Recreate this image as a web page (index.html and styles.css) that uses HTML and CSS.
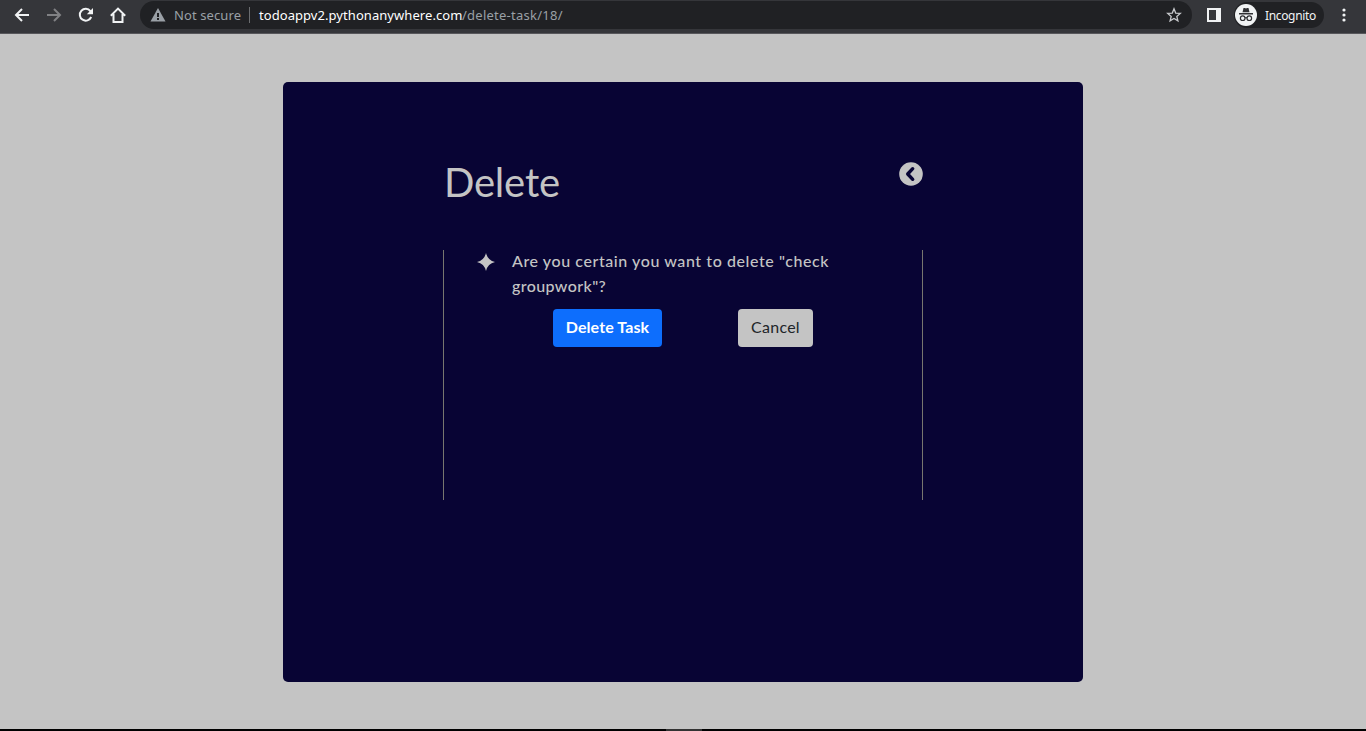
FILE: index.html
```html
<!DOCTYPE html>
<html lang="en">
<head>
<meta charset="utf-8">
<title>Delete</title>
<link rel="stylesheet" href="styles.css">
</head>
<body>
<header class="toolbar">
  <nav class="nav">
    <svg class="icon" viewBox="0 0 16 16"><path d="M15 8H2M8 2 2 8l6 6"/></svg>
    <svg class="icon dim" viewBox="0 0 16 16"><path d="M1 8h13M8 2l6 6-6 6"/></svg>
    <svg class="icon" viewBox="0 0 16 16"><path d="M13.2 10A5.9 5.9 0 1 1 12.4 4.1L14 5.8"/><path class="solid" d="M15 1v6.2H8.8z"/></svg>
    <svg class="icon" viewBox="0 0 16 16"><path d="M.8 8.700 8 1.600l7.200 7.100M3.500 7v8h9V7"/></svg>
  </nav>
  <div class="address">
    <svg class="warning" viewBox="0 0 16 14"><path fill="#9aa0a6" d="M8 0 15.500 13.500H.5z"/><path fill="#202124" d="M7 5h2v4H7zM7 10h2v2H7z"/></svg>
    <span class="security">Not secure</span>
    <span class="divider"></span>
    <span class="host">todoappv2.pythonanywhere.com</span><span class="path">/delete-task/18/</span>
    <svg class="star" viewBox="0 0 16 16"><path d="m8 1.800 1.700 4.300 4.600.3-3.500 3 1.100 4.500L8 11.400l-3.900 2.500 1.100-4.500-3.500-3 4.600-.3z"/></svg>
  </div>
  <svg class="panel-icon" viewBox="0 0 14 14"><path fill="#f1f3f4" d="M0 0h14v14H0z"/><path fill="#35363a" d="M2 2h7v10H2z"/></svg>
  <div class="profile">
    <svg class="avatar" viewBox="0 0 22 22"><circle cx="11" cy="11" r="11" fill="#f1f3f4"/><path fill="#303134" d="m7.500 8.300 1-4.300h1.300l1.200.5 1.200-.5h1.300l1 4.300zM4 9h14v1.400H4z"/><g fill="none" stroke="#303134" stroke-width="1.200"><circle cx="7.700" cy="14.200" r="2.300"/><circle cx="14.300" cy="14.200" r="2.300"/><path d="M10 14q1-.8 2 0"/></g></svg>
    <span class="profile-name">Incognito</span>
  </div>
  <svg class="menu" viewBox="0 0 4 14"><circle cx="2" cy="2" r="1.600"/><circle cx="2" cy="7" r="1.600"/><circle cx="2" cy="12" r="1.600"/></svg>
</header>
<main class="page">
  <section class="card">
    <div class="heading">
      <h1>Delete</h1>
      <svg class="back" viewBox="0 0 24 24"><circle cx="12" cy="12" r="11.800" fill="#c4c4c4" stroke="none"/><path d="m13.700 6.700-5 5.300 5 5.300"/></svg>
    </div>
    <div class="content">
      <div class="message">
        <svg class="spark" viewBox="0 0 18 18"><path fill="#c4c4c4" d="M9 0Q10.700 7.300 18 9 10.700 10.700 9 18 7.300 10.700 0 9 7.300 7.300 9 0z"/></svg>
        <p><span class="line first">Are you certain you want to delete "check</span> <span class="line second">groupwork"?</span></p>
      </div>
      <div class="actions">
        <button class="btn primary">Delete Task</button>
        <button class="btn light">Cancel</button>
      </div>
    </div>
  </section>
</main>
<footer class="edge"><div class="edge-tab"></div></footer>
</body>
</html>
```
FILE: styles.css
```css
* { box-sizing: border-box; }
body { margin: 0; height: 731px; display: flex; flex-direction: column; overflow: hidden; background: #c4c4c4; }
svg { display: block; flex: none; }
.toolbar { display: flex; align-items: flex-start; height: 34px; flex: none; background: #35363a; border-bottom: 1px solid #57575b; font: 13px "Noto Sans", sans-serif; white-space: nowrap; }
.nav { display: flex; gap: 16px; padding: 7px 14px 0; width: 140px; flex: none; }
.icon { width: 16px; height: 16px; fill: none; stroke: #f1f3f4; stroke-width: 2; }
.icon.dim { stroke: #808184; }
.icon .solid { fill: #f1f3f4; stroke: none; }
.address { display: flex; align-items: center; width: 1052px; height: 28px; margin-top: 1px; padding: 0 10px; border-radius: 14px; background: #202124; flex: none; }
.warning { width: 16px; height: 14px; }
.security { margin-left: 8px; width: 67px; color: #9aa0a6; letter-spacing: .1px; }
.divider { width: 1px; height: 16px; margin: 0 9px 0 8px; background: #6b6d70; }
.host { width: 203px; color: #fff; letter-spacing: .06px; }
.path { color: #9aa0a6; letter-spacing: .25px; }
.star { width: 16px; height: 16px; margin-left: auto; fill: none; stroke: #c8cacd; stroke-width: 1.3; }
.panel-icon { width: 14px; height: 14px; margin: 8px 14px 0 15px; }
.profile { display: flex; align-items: center; width: 90px; height: 26px; margin: 2px 18px 0 -1px; border-radius: 13px; background: #202124; color: #f1f3f4; font-size: 12px; flex: none; }
.profile-name { letter-spacing: -.35px; }
.avatar { width: 22px; height: 22px; margin: 0 8px 0 1px; }
.menu { width: 4px; height: 14px; margin-top: 8px; fill: #f1f3f4; }
.page { flex: 1; padding-top: 48px; }
.card { width: 800px; height: 600px; margin: 0 auto; padding: 80px 160px; border-radius: 5px; background: #080434; color: #c4c4c4; font-family: Lato, sans-serif; }
.heading { display: flex; justify-content: space-between; height: 88px; }
h1 { margin: 0 0 0 1px; font-size: 40px; font-weight: 400; line-height: 40px; letter-spacing: -.2px; }
.back { width: 24px; height: 24px; fill: none; stroke: #080434; stroke-width: 3.4; stroke-linecap: round; stroke-linejoin: round; }
.content { height: 250px; border: solid #77766f; border-width: 0 1px; }
.message { display: flex; height: 50px; padding-left: 33px; }
.spark { width: 18px; height: 18px; margin: 3px 17px 0 0; }
.message p { margin: -2px 0 0; font-size: 16px; line-height: 25px; font-weight: 500; white-space: nowrap; }
.line { display: block; }
.first { letter-spacing: .58px; }
.second { letter-spacing: .4px; }
.actions { display: flex; gap: 76px; margin: 9px 0 0 109px; }
.btn { height: 38px; padding: 0 0 2px; border: 0; border-radius: 4px; font: 400 16px/36px Lato, sans-serif; white-space: nowrap; }
.primary { width: 109px; background: #0d6efd; color: #fff; font-weight: 700; letter-spacing: .1px; }
.light { width: 75px; background: #c4c4c4; color: #212529; letter-spacing: .25px; }
.edge { height: 2px; flex: none; background: #000; }
.edge-tab { width: 36px; height: 2px; margin-left: 666px; background: #333; }
```
